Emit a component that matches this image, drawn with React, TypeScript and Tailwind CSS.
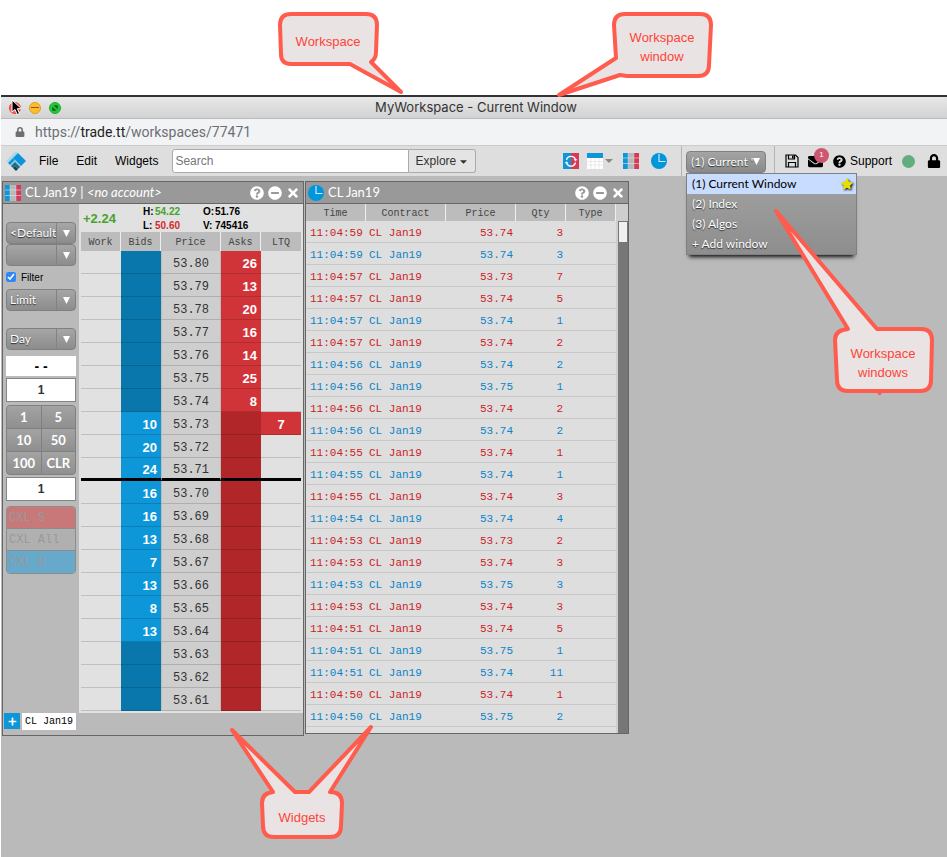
import React from "react";
import { FaQuestionCircle, FaMinusCircle, FaTimes, FaEnvelope, FaLock, FaStar, FaCaretDown, FaPlus } from "react-icons/fa";

const bids: Record<string, number> = {
  "53.73": 10, "53.72": 20, "53.71": 24, "53.70": 16, "53.69": 16,
  "53.68": 13, "53.67": 7, "53.66": 13, "53.65": 8, "53.64": 13,
};
const asks: Record<string, number> = {
  "53.80": 26, "53.79": 13, "53.78": 20, "53.77": 16, "53.76": 14, "53.75": 25, "53.74": 8,
};
const prices = Array.from({ length: 20 }, (_, i) => (53.8 - i * 0.01).toFixed(2));

type Side = "sell" | "buy";
const trades: [string, string, number, Side][] = [
  ["11:04:59", "53.74", 3, "sell"],
  ["11:04:59", "53.74", 3, "buy"],
  ["11:04:57", "53.73", 7, "sell"],
  ["11:04:57", "53.74", 5, "sell"],
  ["11:04:57", "53.74", 1, "buy"],
  ["11:04:57", "53.74", 2, "sell"],
  ["11:04:56", "53.74", 2, "buy"],
  ["11:04:56", "53.75", 1, "buy"],
  ["11:04:56", "53.74", 2, "sell"],
  ["11:04:56", "53.74", 2, "buy"],
  ["11:04:55", "53.74", 1, "sell"],
  ["11:04:55", "53.74", 1, "buy"],
  ["11:04:55", "53.74", 3, "sell"],
  ["11:04:54", "53.74", 4, "buy"],
  ["11:04:53", "53.73", 2, "sell"],
  ["11:04:53", "53.74", 3, "sell"],
  ["11:04:53", "53.75", 3, "buy"],
  ["11:04:53", "53.74", 3, "sell"],
  ["11:04:51", "53.74", 5, "sell"],
  ["11:04:51", "53.75", 1, "buy"],
  ["11:04:51", "53.74", 11, "buy"],
  ["11:04:50", "53.74", 1, "sell"],
  ["11:04:50", "53.75", 2, "buy"],
];

const SHADOW = "[text-shadow:0_1px_1px_rgba(0,0,0,0.7)]";
const AVENIR = "font-[Lato,sans-serif]";
const MONO = "font-['Liberation_Mono',monospace]";

function LadderIcon() {
  return (
    <svg viewBox="0 0 16 16" className="size-4 shrink-0" aria-hidden="true">
      <rect width="5" height="16" fill="#0d96d8" />
      <rect x="5" width="6" height="16" fill="#b4b9bd" />
      <rect x="11" width="5" height="16" fill="#d73a54" />
      <path d="M0 5h16M0 10.5h16" stroke="#e4e4e4" strokeWidth="0.6" />
      <path d="M5 0v16M11 0v16" stroke="#e4e4e4" strokeWidth="0.4" />
    </svg>
  );
}

function ClockIcon() {
  return (
    <svg viewBox="0 0 16 16" className="size-4 shrink-0" aria-hidden="true">
      <circle cx="8" cy="8" r="8" fill="#0096dc" />
      <path d="M8 1v7.5h6.5" fill="none" stroke="#cfe9f7" strokeWidth="1.2" />
    </svg>
  );
}

function DownArrow({ className = "" }: { className?: string }) {
  return (
    <svg viewBox="0 0 7 7" className={`size-[7px] ${className}`} aria-hidden="true">
      <path d="M0 0h7L3.5 7z" fill="#fff" />
    </svg>
  );
}

function WidgetTitle({ icon, children }: { icon: React.ReactNode; children: React.ReactNode }) {
  return (
    <header className={`flex h-[22px] items-center border-b border-[#666] bg-[#999] pr-[3px] pl-0.5 text-[13px] text-white ${AVENIR}`}>
      {icon}
      <h2 className="ml-1 flex-1 truncate pt-px">{children}</h2>
      <div className="flex items-center gap-1">
        <button aria-label="Help"><FaQuestionCircle size={14} /></button>
        <button aria-label="Minimize"><FaMinusCircle size={14} /></button>
        <button aria-label="Close"><FaTimes size={14} /></button>
      </div>
    </header>
  );
}

function GreySelect({ label, value }: { label: string; value: string }) {
  return (
    <label className="relative block">
      <select
        aria-label={label}
        className={`block h-[22px] w-full appearance-none rounded-[4px] border border-[#808080] bg-linear-to-b from-[#a6a6a6] to-[#8c8c8c] pr-[18px] pl-[3px] text-[12px] text-white ${AVENIR} ${SHADOW}`}
      >
        <option>{value}</option>
      </select>
      <span className="pointer-events-none absolute inset-y-px right-px flex w-[19px] items-center justify-center border-l border-[#828282]">
        <DownArrow />
      </span>
    </label>
  );
}

function OrderSidebar() {
  const input = "block h-6 w-full border border-[#858585] bg-white text-center text-[12px] font-bold text-[#333]";
  const cancel = `block h-[22px] w-full px-0.5 text-left text-[12px] text-[#999] ${MONO}`;
  return (
    <aside className="flex w-[76px] shrink-0 flex-col bg-[#bababa] px-[3px] pt-[18px]">
      <GreySelect label="Account" value="<Default" />
      <GreySelect label="Algo" value="" />
      <label className="mt-[3px] flex h-4 items-center gap-[5px] text-[10px] text-black">
        <input type="checkbox" defaultChecked className="size-[10px] accent-[#2f86f6]" />
        Filter
      </label>
      <div className="mt-1"><GreySelect label="Order type" value="Limit" /></div>
      <div className="mt-[17px]"><GreySelect label="Time in force" value="Day" /></div>
      <output className="mt-[6px] block h-5 bg-white text-center text-[14px] leading-5 font-bold text-black">- -</output>
      <input aria-label="Quantity" defaultValue="1" className={`mt-0.5 ${input}`} />
      <div className={`mt-[3px] grid grid-cols-2 gap-px overflow-hidden rounded-[4px] border border-[#808080] bg-[#808080] text-[13px] text-white ${AVENIR} ${SHADOW}`}>
        {["1", "5", "10", "50", "100", "CLR"].map((t) => (
          <button key={t} className="h-[22px] bg-linear-to-b from-[#a3a3a3] to-[#8f8f8f] pt-px font-bold">{t}</button>
        ))}
      </div>
      <input aria-label="Order size" defaultValue="1" className={`mt-0.5 ${input}`} />
      <div className="mt-[5px] divide-y divide-[#8c8c8c] overflow-hidden rounded-[4px] border border-[#8c8c8c]">
        <button className={`${cancel} bg-[#c87878]`}>CXL S</button>
        <button className={`${cancel} bg-[#b0b0b0]`}>CXL All</button>
        <button className={`${cancel} bg-[#67a9cb]`}>CXL B</button>
      </div>
    </aside>
  );
}

function OrderLadder() {
  const th = "border-r border-[#eee] bg-[#bcbcbc] px-0 pt-0.5 pb-0 font-normal last:border-r-0";
  return (
    <section className="flex w-[302px] flex-col border border-[#666] bg-[#bababa]">
      <WidgetTitle icon={<LadderIcon />}>
        CL Jan19 | <em>&lt;no account&gt;</em>
      </WidgetTitle>
      <div className="flex">
        <OrderSidebar />
        <div className="flex-1 bg-[#e1e1e1] px-0.5 pb-0.5">
          <div className="flex h-7 items-center pt-0.5 pl-0.5 font-bold text-black">
            <span className="w-[60px] text-[13px] text-[#46a42c]">+2.24</span>
            <dl className="grid grid-cols-[12px_48px_12px_auto] text-[10px] leading-[14px]">
              <dt>H:</dt><dd className="text-[#46a42c]">54.22</dd>
              <dt>O:</dt><dd>51.76</dd>
              <dt>L:</dt><dd className="text-[#d12b30]">50.60</dd>
              <dt>V:</dt><dd>745416</dd>
            </dl>
          </div>
          <table className="w-full table-fixed border-separate border-spacing-0">
            <colgroup>
              <col className="w-10" /><col className="w-10" /><col className="w-[60px]" /><col className="w-10" /><col className="w-10" />
            </colgroup>
            <thead className={`text-[10px] text-[#444] ${MONO}`}>
              <tr className="h-[19px]">
                {["Work", "Bids", "Price", "Asks", "LTQ"].map((h) => <th key={h} className={th}>{h}</th>)}
              </tr>
            </thead>
            <tbody>
              {prices.map((p) => {
                const edge = p === "53.71" ? "pt-1 border-b-[3px] border-black" : "pt-[3px] border-b border-black/15";
                return (
                  <tr key={p} className="h-[23px] text-[13px] leading-4">
                    <td className={`px-0 pb-0 ${edge}`} />
                    <td className={`pr-1 pb-0 pl-0 text-right font-bold text-white ${edge} ${bids[p] ? "bg-[#0d96d8]" : "bg-[#0977ab]"}`}>{bids[p]}</td>
                    <td className={`border-x border-x-[#bbb] bg-[#cecece] px-0 pb-0 text-center text-[12px] text-[#333] ${MONO} ${edge}`}>{p}</td>
                    <td className={`pr-1 pb-0 pl-0 text-right font-bold text-white ${edge} ${asks[p] ? "bg-[#d13438]" : "bg-[#b02629]"}`}>{asks[p]}</td>
                    <td className={`px-0 pb-0 text-center font-bold text-white ${edge} ${p === "53.73" ? "bg-[#d13438]" : ""}`}>{p === "53.73" ? 7 : ""}</td>
                  </tr>
                );
              })}
            </tbody>
          </table>
        </div>
      </div>
      <footer className="flex h-[22px] items-start gap-0.5 pl-px">
        <button aria-label="Add tab" className="flex size-4 items-center justify-center bg-[#0d96d8] text-white"><FaPlus size={9} /></button>
        <button className={`h-[17px] bg-white px-[3px] text-[10px] text-black ${MONO}`}>CL Jan19</button>
      </footer>
    </section>
  );
}

function TradesWidget() {
  return (
    <section className="flex h-[553px] w-[324px] flex-col border border-[#666] bg-[#dedede]">
      <WidgetTitle icon={<ClockIcon />}>CL Jan19</WidgetTitle>
      <div className="flex min-h-0 flex-1">
        <table className={`h-fit flex-1 table-fixed border-separate border-spacing-0 ${MONO}`}>
          <colgroup>
            <col className="w-[60px]" /><col className="w-20" /><col className="w-[70px]" /><col className="w-[50px]" /><col className="w-[50px]" />
          </colgroup>
          <thead className="text-[10px] text-[#444]">
            <tr className="h-[17px]">
              {["Time", "Contract", "Price", "Qty", "Type"].map((h) => (
                <th key={h} className="border-r border-[#eee] bg-[#bcbcbc] px-0 pt-0.5 pb-0 font-normal">{h}</th>
              ))}
            </tr>
          </thead>
          <tbody>
            {trades.map(([time, price, qty, side], i) => (
              <tr key={i} className={`h-[22px] text-[11px] leading-4 *:border-b *:border-[#c8c8c8] *:pt-[3px] *:pb-0 ${side === "sell" ? "text-[#cc2226]" : "text-[#0a84c8]"}`}>
                <td className="pr-0 pl-1">{time}</td>
                <td className="pr-0 pl-[3px]">CL Jan19</td>
                <td className="pr-[3px] pl-0 text-right">{price}</td>
                <td className="pr-[3px] pl-0 text-right">{qty}</td>
                <td />
              </tr>
            ))}
          </tbody>
        </table>
        <div className="flex w-3 flex-col bg-[#cecece] pt-[17px]">
          <div className="ml-0.5 flex-1 bg-[#777]">
            <div className="h-[22px] border border-[#777] bg-[#f0f0f0]" />
          </div>
        </div>
      </div>
    </section>
  );
}

function Logo() {
  return (
    <svg viewBox="0 0 22 22" className="size-[22px]" aria-hidden="true">
      <path d="M11 1L13 3 3 13 1 11z" fill="#a9d8e4" />
      <path d="M13 3L21 11 16 16 8 8z" fill="#0a94dc" />
      <path d="M8 8L10 10 5 15 3 13z" fill="#0a94dc" />
      <path d="M10 10L16 16 14 18 10 14 7 17 5 15z" fill="#8cc8d6" />
      <path d="M10 12L15 17 13 19 10 16 8 18 6 16z" fill="#1c6f8c" />
      <path d="M10 16L13 19 11 21 8 18z" fill="#0e4358" />
    </svg>
  );
}

function Toolbar() {
  return (
    <nav className="flex h-[30px] items-center bg-[#dedede] pl-1 text-[12px] text-black">
      <Logo />
      <button className="ml-3">File</button>
      <button className="ml-[18px]">Edit</button>
      <button className="ml-[18px]">Widgets</button>
      <div className="ml-[14px] flex h-6">
        <input aria-label="Search" placeholder="Search" className="w-[237px] rounded-l-[3px] border border-[#aaa] bg-white px-0.5 text-[12px] placeholder:text-[#777]" />
        <button className="flex w-[67px] items-center justify-center rounded-r-[3px] border border-l-0 border-[#aaa] bg-[#e4e4e4] text-[#333]">
          Explore<FaCaretDown size={11} className="ml-0.5" />
        </button>
      </div>
      <div className="ml-auto flex h-full items-center">
        <button aria-label="Sync widgets">
          <svg viewBox="0 0 16 16" className="size-4">
            <rect width="8" height="16" fill="#0d96d8" />
            <rect x="8" width="8" height="16" fill="#d73a54" />
            <path d="M3.500 7A4.600 4.600 0 0 1 12.500 7M12.500 9.500A4.600 4.600 0 0 1 3.500 9.500" fill="none" stroke="#fff" strokeWidth="1.300" />
            <path d="M10.500 6.200h4L12.500 8.200zM1.500 10.300h4L3.500 8.300z" fill="#fff" />
          </svg>
        </button>
        <button aria-label="Grid widgets" className="ml-2 flex items-center gap-0.5 text-[#888]">
          <svg viewBox="0 0 16 16" className="size-4">
            <rect width="16" height="16" fill="#fff" />
            <rect width="16" height="5" fill="#0d96d8" />
            <path d="M0 8.500h16M0 12h16M4 5v11M8 5v11M12 5v11" stroke="#ddd" strokeWidth="0.600" />
          </svg>
          <svg viewBox="0 0 8 4" className="h-1 w-2"><path d="M0 0h8L4 4z" fill="currentColor" /></svg>
        </button>
        <button aria-label="Ladder widget" className="ml-[10px]"><LadderIcon /></button>
        <button aria-label="Time and sales widget" className="ml-3"><ClockIcon /></button>
        <div className="relative ml-[14px] flex h-full w-[94px] items-center border-x border-[#b4b4b4] pl-1">
          <button
            aria-expanded="true"
            className={`mt-px flex h-[22px] w-20 items-center rounded-[4px] border border-[#808080] bg-linear-to-b from-[#a4a4a4] to-[#8a8a8a] pl-1 text-[12px] whitespace-nowrap text-white ${AVENIR} ${SHADOW}`}
          >
            (1) Current '<DownArrow />
          </button>
          <WindowMenu />
        </div>
        <button aria-label="Save" className="ml-[10px]">
          <svg viewBox="0 0 14 14" className="size-[14px]" fill="none" stroke="#000" strokeWidth="1.200">
            <path d="M1 1h9.500L13 3.500V13H1z" />
            <path d="M3.500 1v4h6V1M3.500 13V8.500h7V13" />
            <path d="M7.800 1.500v3" strokeWidth="1.600" />
          </svg>
        </button>
        <button aria-label="Messages" className="relative ml-[9px]">
          <FaEnvelope size={15} />
          <span className="absolute -top-[6px] left-[6px] flex size-[15px] items-center justify-center rounded-full bg-[#cf5670] text-[8px] text-white">1</span>
        </button>
        <button className="ml-[10px] flex items-center gap-1">
          <FaQuestionCircle size={13} />Support
        </button>
        <span className="ml-[10px] size-[13px] rounded-full bg-[#5fae7c]" role="img" aria-label="Connected" />
        <button aria-label="Lock" className="mr-[6px] ml-[12px]"><FaLock size={14} /></button>
      </div>
    </nav>
  );
}

function WindowMenu() {
  return (
    <ul className={`absolute top-[27px] left-1 z-10 w-[171px] border border-[#808080] bg-linear-to-b from-[#a2a2a2] to-[#8e8e8e] text-[12px] text-white shadow-[0_5px_4px_-3px_#111] ${AVENIR}`}>
      <li>
        <button className="flex h-5 w-full items-center justify-between bg-[#c8dcff] pr-[3px] pl-[5px] text-black">
          (1) Current Window
          <FaStar size={12} className="text-[#e6e000] drop-shadow-[1px_1px_1px_#000]" />
        </button>
      </li>
      {["(2) Index", "(3) Algos", "+ Add window"].map((t) => (
        <li key={t}><button className={`flex h-5 w-full items-center pl-[5px] ${SHADOW}`}>{t}</button></li>
      ))}
    </ul>
  );
}

function Callouts() {
  const note = "absolute flex items-center justify-center text-center text-[13px] leading-[19px] text-[#ff4438]";
  return (
    <div className="pointer-events-none absolute inset-0 z-20">
      <svg className="absolute top-0 left-0 h-[857px] w-[947px]" viewBox="0 0 947 857" fill="#e9e3e3" stroke="#ff5c4d" strokeWidth="4" strokeLinejoin="round" aria-hidden="true">
        <path d="M291 14H366Q377 14 377 25L376 52Q376 59 371 62L401 92L350 64H291Q281 64 281 54L280 25Q280 14 291 14Z" />
        <path d="M625 14H700Q711 14 711 25L709 65Q709 76 698 76H627L620 75L559 95L616 58L614 25Q614 14 625 14Z" />
        <path d="M848 329L776 211L877 329H921Q932 329 932 340L931 380Q931 391 920 391H880L879.500 393L879 391H848Q837 391 837 380L835 340Q835 330 848 329Z" />
        <path d="M273 792L232 730L295 792H309L371 727L330 792Q342 792 342 803L341 826Q341 837 330 837H274Q263 837 263 826L262 803Q262 793 273 792Z" />
      </svg>
      <p className={`${note} top-[14px] left-[280px] h-[54px] w-24`}>Workspace</p>
      <p className={`${note} top-[14px] left-[614px] h-[66px] w-24`}>Workspace<br />window</p>
      <p className={`${note} top-[331px] left-[835px] h-[64px] w-24`}>Workspace<br />windows</p>
      <p className={`${note} top-[794px] left-[262px] h-[46px] w-20`}>Widgets</p>
    </div>
  );
}

export default function App() {
  return (
    <div className="relative flex min-h-screen flex-col overflow-hidden bg-white pt-[95px] pl-px font-['Liberation_Sans',Arial,sans-serif]">
      <header className="relative flex h-6 items-center justify-center border-t-2 border-b border-t-[#333] border-b-[#bbb] bg-linear-to-b from-[#e8e8e8] to-[#d2d2d2]">
        <div className="absolute left-2 flex gap-2">
          <button aria-label="Close window" className="size-3 rounded-full border border-[#e0443e] bg-[#fc5b57]" />
          <button aria-label="Minimize window" className="flex size-3 items-center justify-center rounded-full border border-[#dfa023] bg-[#fdbc2e]">
            <span className="h-px w-2 bg-[#985712]" />
          </button>
          <button aria-label="Zoom window" className="flex size-3 items-center justify-center rounded-full border border-[#1dad2b] bg-[#27c840]">
            <svg viewBox="0 0 8 8" className="size-2"><path d="M2.500 1.200H6.800V5.500zM1.200 2.500V6.800H5.500z" fill="#0b6512" /></svg>
          </button>
        </div>
        <svg viewBox="0 0 12 17" className="absolute top-[2px] left-[10px] h-[17px] w-3" aria-hidden="true">
          <path d="M1 1v12l3-2.500 2.200 5 2.300-1-2.200-4.800H10.500z" fill="#000" stroke="#fff" strokeWidth="1" />
        </svg>
        <h1 className="pl-1 font-[Inter,sans-serif] text-[13px] text-[#333]">MyWorkspace - Current Window</h1>
      </header>
      <div className="flex h-[27px] items-center border-b border-[#ccc] bg-[#f2f3f5] pl-[14px] font-[Roboto,sans-serif] text-[14px] text-[#6b6f74]">
        <FaLock size={10} className="mr-[10px]" />
        <span>https://<span className="text-[#222]">trade.tt</span>/workspaces/77471</span>
      </div>
      <Toolbar />
      <main className="flex flex-1 items-start gap-px bg-[#bababa] pt-[5px] pl-px">
        <OrderLadder />
        <TradesWidget />
      </main>
      <Callouts />
    </div>
  );
}
